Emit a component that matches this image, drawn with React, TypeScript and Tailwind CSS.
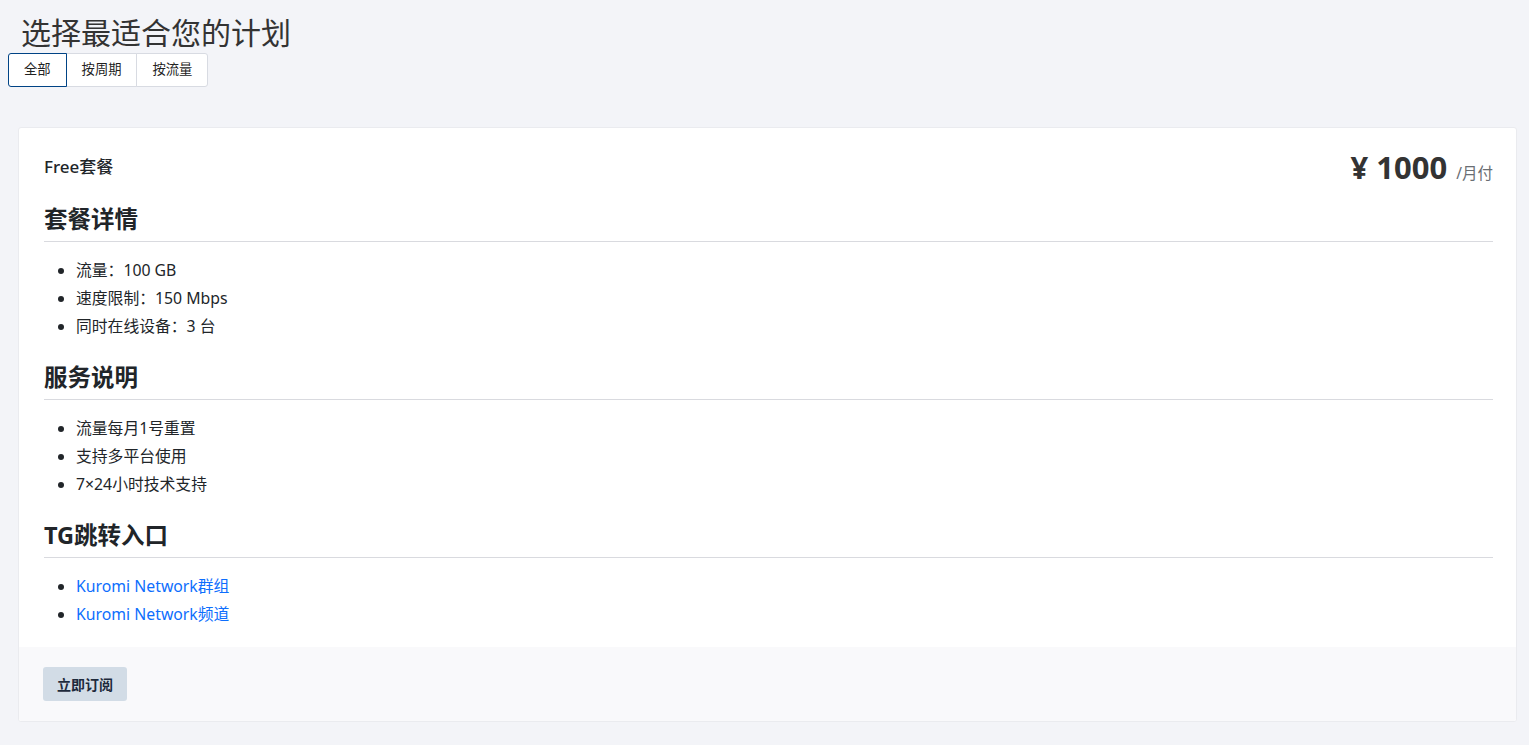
import { useState } from "react";

const tabs = ["全部", "按周期", "按流量"];

const sections = [
  { title: "套餐详情", items: ["流量：100 GB", "速度限制：150 Mbps", "同时在线设备：3 台"], link: false },
  { title: "服务说明", items: ["流量每月1号重置", "支持多平台使用", "7×24小时技术支持"], link: false },
  { title: "TG跳转入口", items: ["Kuromi Network群组", "Kuromi Network频道"], link: true },
];

const App = () => {
  const [active, setActive] = useState(0);

  return (
    <div className="min-h-[745px] bg-[#f3f4f8] text-[#212529] font-['Noto_Sans','Noto_Sans_CJK_SC',sans-serif] pt-[14px] pb-[25px]">
      <h1 className="ml-[21px] text-[30px] leading-[38px] text-[#333]">选择最适合您的计划</h1>

      {/* Tabs */}
      <div className="ml-[8px] mt-[1px] flex">
        {tabs.map((tab, i) => (
          <button
            key={tab}
            onClick={() => setActive(i)}
            className={
              i === active
                ? "h-[34px] px-[15px] text-[13.3px] bg-white border border-[#004385] rounded-l-[3px] text-[#222] relative z-10"
                : "h-[34px] px-[15px] text-[13.3px] bg-white border border-[#d8dbe2] -ml-px text-[#222] last:rounded-r-[3px]"
            }
          >
            {tab}
          </button>
        ))}
      </div>

      {/* Plan card */}
      <div className="ml-[18px] mr-[12px] mt-[40px] bg-white border border-[#eaebef] rounded-[3px] overflow-hidden">
        <div className="pl-[25px] pr-[23px] pt-[22px] pb-[19px] flex flex-col">
          <div className="flex items-start justify-between">
            <div className="text-[17px] font-medium leading-[34px]">Free套餐</div>
            <div className="flex items-baseline gap-[9px] text-[#333]">
              <span className="text-[31px] font-bold leading-[34px]">¥ 1000</span>
              <span className="text-[15.5px] text-[#6a6e73]">/月付</span>
            </div>
          </div>

          {sections.map((s, idx) => (
            <div key={s.title} className={idx === 0 ? "mt-[18px]" : "mt-[21px]"}>
              <h2 className="text-[23.5px] font-bold leading-[32px] pb-[6px] border-b border-[#d9dadf]">{s.title}</h2>
              <ul className="list-disc pl-[32px] mt-[14px]">
                {s.items.map((it) => (
                  <li key={it} className="text-[15.8px] leading-[28px]">
                    {s.link ? <a href="#" className="text-[#0d6efd]">{it}</a> : it}
                  </li>
                ))}
              </ul>
            </div>
          ))}
        </div>

        {/* Footer */}
        <div className="bg-[#f9f9fb] px-[24px] py-[20px]">
          <button className="h-[34px] px-[14px] bg-[#d2dce6] rounded-[3px] text-[14px] font-bold text-[#1e2a3c]">立即订阅</button>
        </div>
      </div>
    </div>
  );
};

export default App;
